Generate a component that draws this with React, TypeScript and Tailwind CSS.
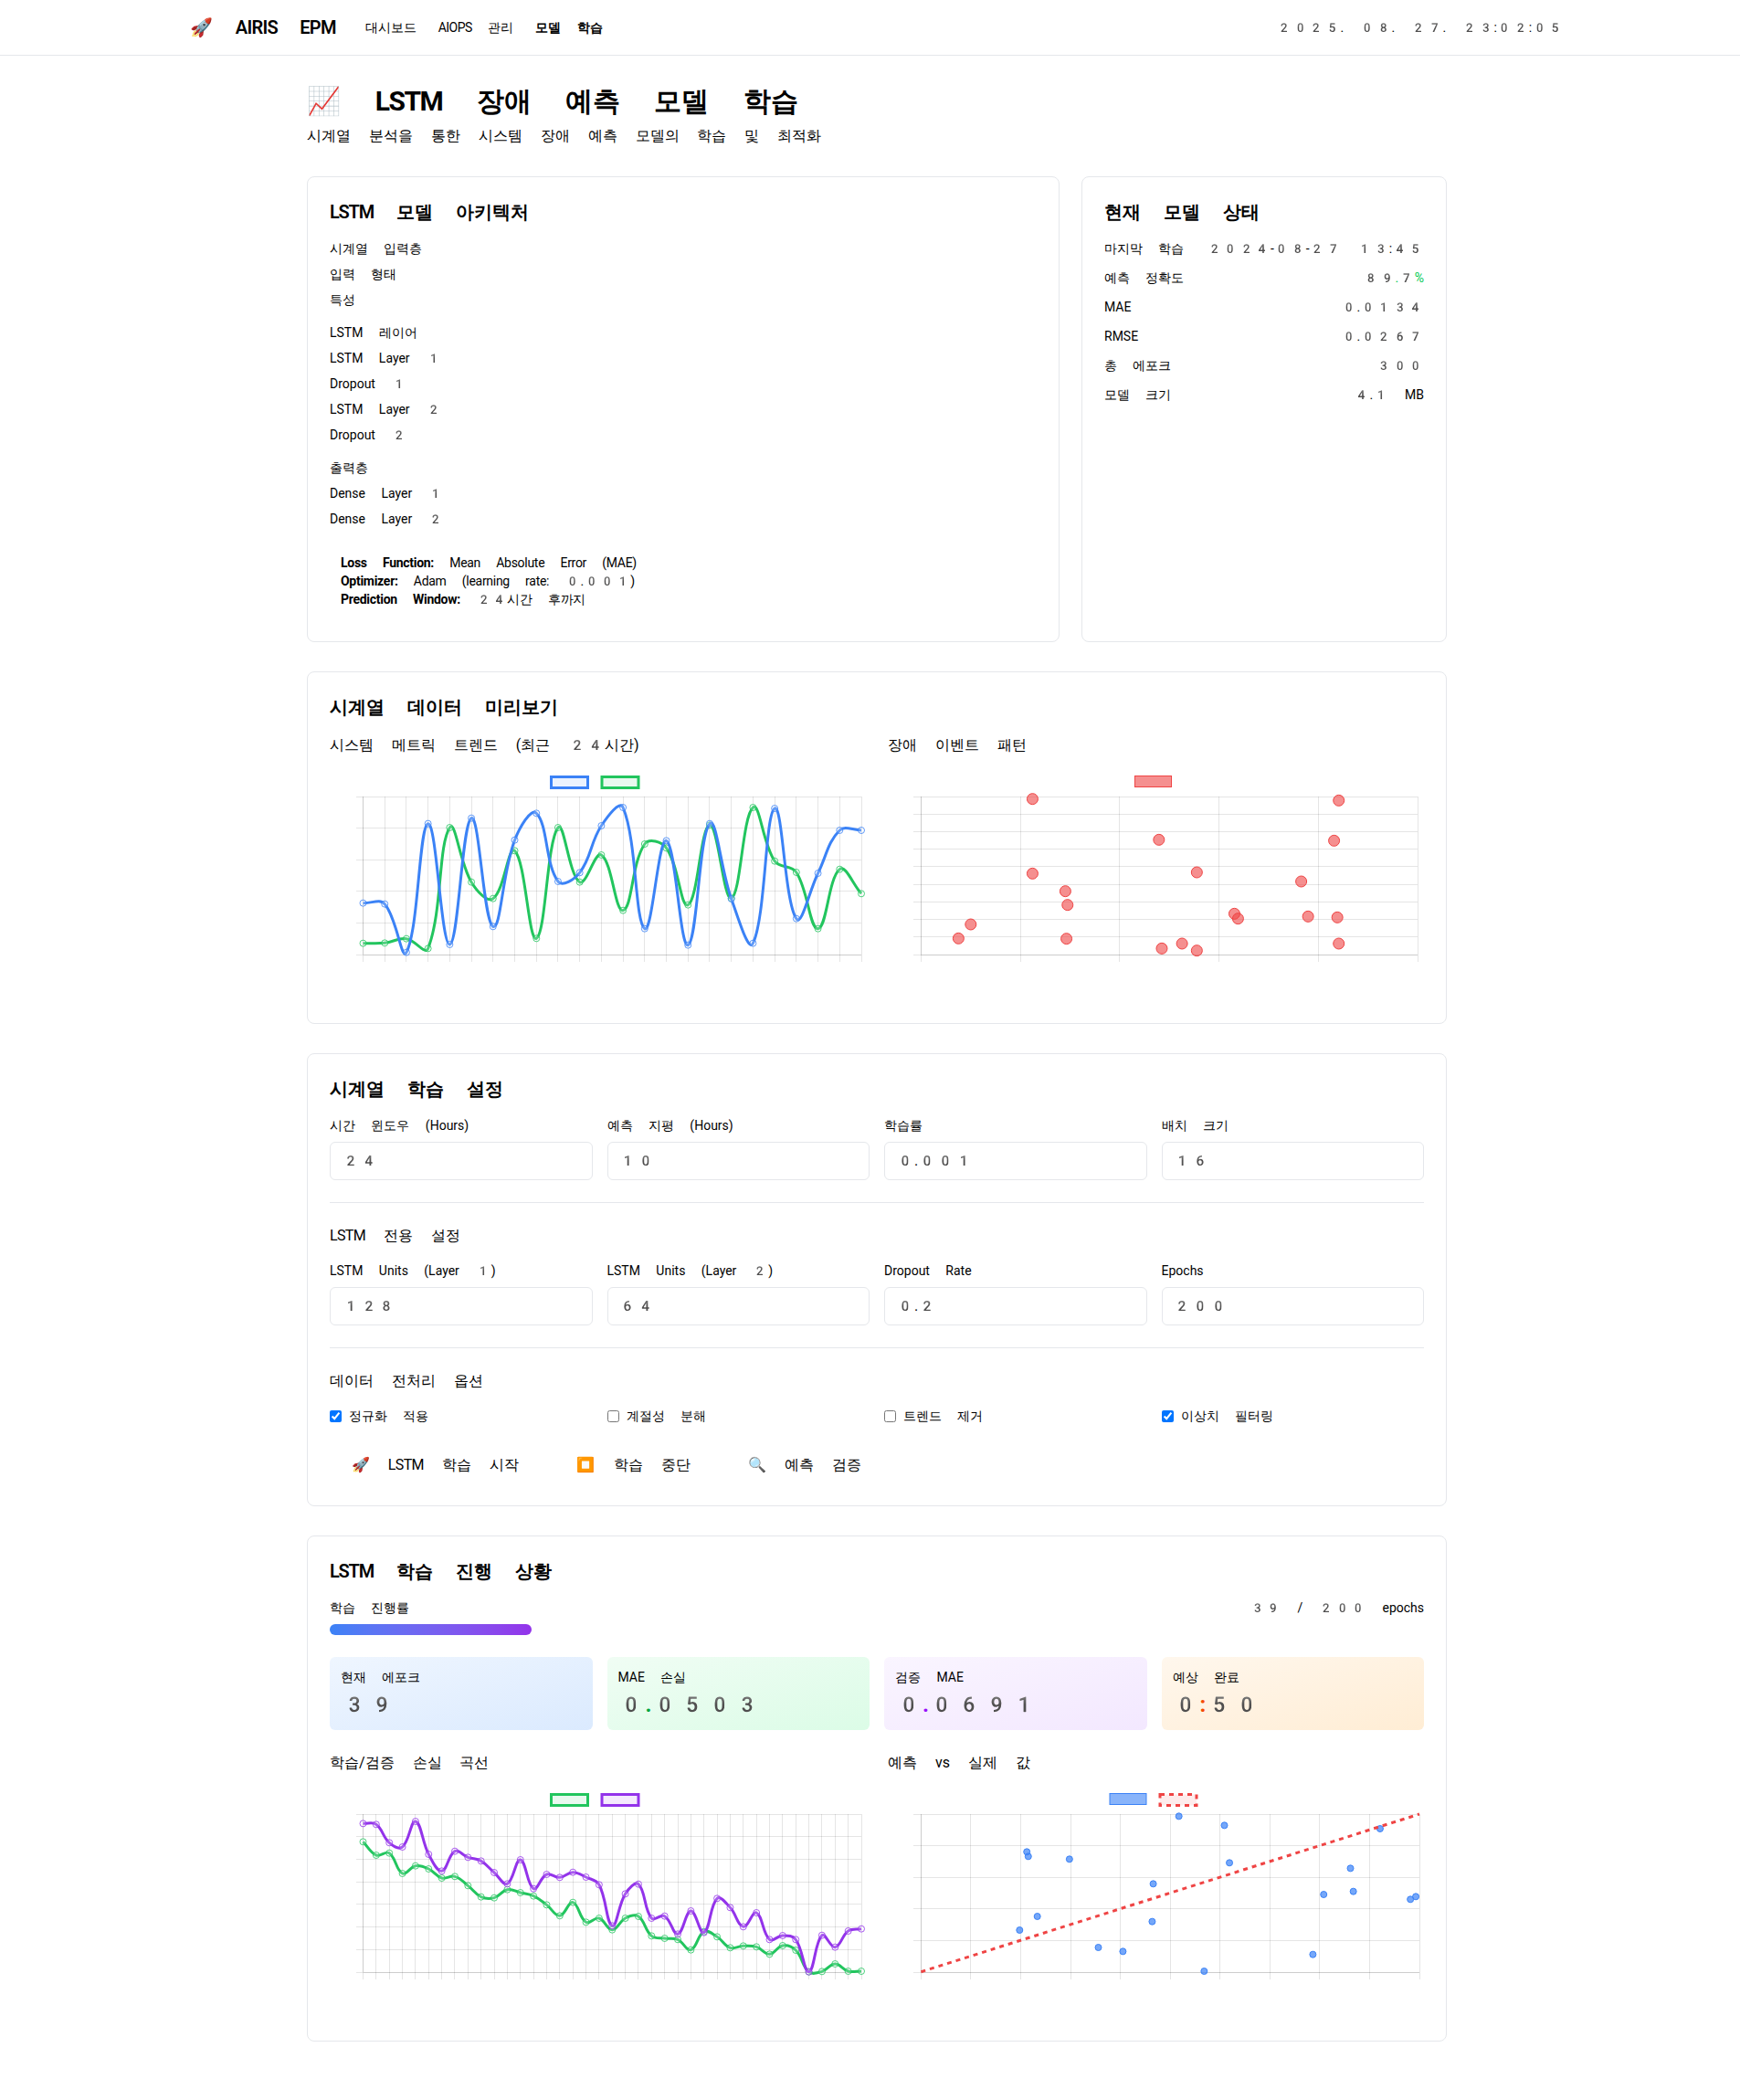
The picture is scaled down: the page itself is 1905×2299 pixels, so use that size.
import type { ReactNode } from "react"

// Chart.js style bezier through the points (tension 0.4)
function splinePath(points: number[][]) {
  const t = 0.4
  let d = `M${points[0][0]} ${points[0][1]}`
  const ctrl = points.map((p, i) => {
    const prev = points[i - 1] ?? p
    const next = points[i + 1] ?? p
    const d01 = Math.hypot(p[0] - prev[0], p[1] - prev[1])
    const d12 = Math.hypot(next[0] - p[0], next[1] - p[1])
    const sum = d01 + d12 || 1
    const fa = (t * d01) / sum
    const fb = (t * d12) / sum
    return {
      before: [p[0] - fa * (next[0] - prev[0]), p[1] - fa * (next[1] - prev[1])],
      after: [p[0] + fb * (next[0] - prev[0]), p[1] + fb * (next[1] - prev[1])],
    }
  })
  for (let i = 1; i < points.length; i++) {
    const a = ctrl[i - 1].after
    const b = ctrl[i].before
    d += ` C${a[0]} ${a[1]} ${b[0]} ${b[1]} ${points[i][0]} ${points[i][1]}`
  }
  return d
}

function Grid({ xs, ys }: { xs: number[]; ys: number[] }) {
  const left = xs[0]
  const right = xs[xs.length - 1]
  const top = ys[0]
  const bottom = ys[ys.length - 1]
  return (
    <g stroke="#000" strokeOpacity="0.1" strokeWidth="1" shapeRendering="crispEdges">
      {xs.map((x) => (
        <line key={x} x1={x} x2={x} y1={top} y2={bottom + 8} />
      ))}
      {ys.map((y) => (
        <line key={y} x1={left - 8} x2={right} y1={y} y2={y} />
      ))}
      <line x1={left} x2={left} y1={top} y2={bottom} />
      <line x1={left} x2={right} y1={bottom} y2={bottom} />
    </g>
  )
}

function Box({ x, color, fill, dashed }: { x: number; color: string; fill: string; dashed?: boolean }) {
  return (
    <rect x={x} y={10.5} width={40} height={12} fill={fill} stroke={color} strokeWidth="3" strokeDasharray={dashed ? "5 5" : undefined} />
  )
}

function Line({ data, color }: { data: number[][]; color: string }) {
  return (
    <g>
      <path d={splinePath(data)} fill="none" stroke={color} strokeWidth="3" />
      {data.map((p, i) => (
        <circle key={i} cx={p[0]} cy={p[1]} r="3.5" fill="rgba(255,255,255,0.2)" stroke={color} strokeOpacity="0.8" strokeWidth="1" />
      ))}
    </g>
  )
}

function Chart({ children }: { children: ReactNode }) {
  return (
    <svg width="587" height="256" viewBox="0 0 587 256" className="block">
      {children}
    </svg>
  )
}

const evenly = (a: number, b: number, n: number) => Array.from({ length: n }, (_, i) => a + ((b - a) * i) / (n - 1))

// values below are read off the reference
const trendYs = [32, 66, 101, 135, 170, 205]
const trendXs = evenly(36.5, 582, 24)
const blueRaw = [746, 749, 908, 485, 882, 467, 823, 539, 451, 675, 646, 492, 432, 830, 541, 884, 485, 732, 878, 435, 797, 648, 507, 507]
const greenRaw = [878, 877, 863, 895, 498, 677, 731, 574, 862, 498, 677, 588, 770, 552, 565, 752, 490, 730, 432, 608, 645, 830, 635, 715]
const blueLine = blueRaw.map((v, i) => [trendXs[i], v / 3 - 100])
const greenLine = greenRaw.map((v, i) => [trendXs[i], v / 3 - 100])

const eventXs = [122, 398, 672, 947, 1222, 1498].map((v) => v / 2.529 - 12)
const eventYs = [247, 304, 361, 418, 475, 535, 592, 649, 706, 766].map((v) => v / 3 - 50)
const eventPoints = [
  [431, 254], [1279, 259], [781, 388], [1266, 391], [431, 499], [886, 495], [1175, 525], [522, 557], [528, 602], [990, 631],
  [1000, 647], [1194, 640], [1275, 643], [260, 666], [226, 712], [525, 713], [1279, 729], [845, 729], [789, 745], [886, 752],
]

const lossYs = [198, 271, 346, 421, 493, 568, 643, 718].map((v) => v / 3 - 34)
const lossXs = evenly(36.5, 582, 39)
const purpleRaw = [229, 232, 292, 306, 222, 330, 385, 320, 340, 352, 390, 427, 348, 443, 396, 406, 389, 405, 430, 565, 460, 428, 540, 533, 592, 516, 587, 475, 505, 568, 522, 610, 597, 610, 716, 596, 635, 582, 575]
const lossRaw = [289, 333, 326, 393, 368, 378, 408, 403, 433, 470, 473, 446, 456, 467, 496, 532, 488, 553, 540, 578, 540, 534, 598, 606, 610, 644, 584, 601, 637, 631, 634, 658, 630, 645, 716, 715, 690, 714, 714]
const purpleLine = purpleRaw.map((v, i) => [lossXs[i], v / 3 - 34])
const lossLine = lossRaw.map((v, i) => [lossXs[i], v / 3 - 34])

const predXs = [97, 234, 373, 512, 648, 787, 925, 1063, 1201, 1338, 1477].map((v) => v / 2.529 - 2)
const predYs = [198, 301, 406, 508, 612, 718].map((v) => v / 3 - 34)
const predPoints = [
  [811, 205], [937, 235], [1368, 246], [390, 322], [394, 337], [508, 346], [951, 358], [1286, 376], [740, 427], [1294, 452],
  [1212, 462], [1467, 469], [1452, 478], [419, 534], [370, 579], [737, 551], [588, 636], [656, 649], [1182, 659], [881, 714],
]

function TrendChart() {
  return (
    <Chart>
      <Box x={242.5} color="#3b82f6" fill="rgba(59,130,246,0.1)" />
      <Box x={298} color="#22c55e" fill="rgba(34,197,94,0.1)" />
      <Grid xs={trendXs} ys={trendYs} />
      <Line data={greenLine} color="#22c55e" />
      <Line data={blueLine} color="#3b82f6" />
    </Chart>
  )
}

function EventChart() {
  return (
    <Chart>
      <rect x={270.5} y={9.5} width={40} height={12} fill="rgba(239,68,68,0.6)" stroke="#ef4444" strokeWidth="1" />
      <Grid xs={eventXs} ys={eventYs} />
      {eventPoints.map((p, i) => (
        <circle key={i} cx={p[0] / 2.529 - 12} cy={p[1] / 3 - 50} r="6" fill="rgba(239,68,68,0.6)" stroke="#ef4444" strokeWidth="1" />
      ))}
    </Chart>
  )
}

function LossChart() {
  return (
    <Chart>
      <Box x={242.5} color="#22c55e" fill="rgba(34,197,94,0.1)" />
      <Box x={298} color="#9333ea" fill="rgba(147,51,234,0.1)" />
      <Grid xs={lossXs} ys={lossYs} />
      <Line data={lossLine} color="#22c55e" />
      <Line data={purpleLine} color="#9333ea" />
    </Chart>
  )
}

function PredictionChart() {
  return (
    <Chart>
      <rect x={243} y={9.5} width={40} height={12} fill="rgba(59,130,246,0.6)" stroke="#3b82f6" strokeWidth="1" />
      <Box x={298} color="#ef4444" fill="rgba(239,68,68,0.1)" dashed />
      <Grid xs={predXs} ys={predYs} />
      {predPoints.map((p, i) => (
        <circle key={i} cx={p[0] / 2.529 - 2} cy={p[1] / 3 - 34} r="3.5" fill="rgba(59,130,246,0.7)" stroke="#3b82f6" strokeWidth="1" />
      ))}
      <line x1={36.4} y1={204.7} x2={582} y2={32} stroke="#ef4444" strokeWidth="3" strokeDasharray="5 5" />
    </Chart>
  )
}

function Card({ title, children }: { title: ReactNode; children: ReactNode }) {
  return (
    <section className="rounded-lg border border-gray-200 bg-white p-6">
      <h2 className="mb-4 text-xl leading-7 font-semibold">{title}</h2>
      {children}
    </section>
  )
}

function Field({ label, value }: { label: string; value: string }) {
  return (
    <div>
      <label className="mb-2 block text-sm">{label}</label>
      <input defaultValue={value} className="block h-[42px] w-full rounded-md border border-gray-200 px-3 pb-0.5 text-base outline-none" />
    </div>
  )
}

function Check({ label, checked }: { label: string; checked?: boolean }) {
  return (
    <label className="flex items-center text-sm">
      <input type="checkbox" defaultChecked={checked} className="mr-2" />
      {label}
    </label>
  )
}

function Metric({ label, bg, children }: { label: string; bg: string; children: ReactNode }) {
  return (
    <div className={`h-20 rounded-md bg-gradient-to-br p-3 ${bg}`}>
      <div className="text-sm">{label}</div>
      <div className="mt-1 text-2xl font-bold">{children}</div>
    </div>
  )
}

function StatusRow({ label, children }: { label: string; children: ReactNode }) {
  return (
    <div className="flex justify-between text-sm">
      <span>{label}</span>
      <span>{children}</span>
    </div>
  )
}

export default function App() {
  return (
    <div className="overflow-hidden bg-white">
      <div className="w-[1920px] font-['Noto_Color_Emoji',Roboto,sans-serif] text-black">
        <header className="h-[61px] border-b border-gray-200">
          <div className="mx-auto flex h-[60px] max-w-[1536px] items-center justify-between px-4">
            <div className="flex items-center gap-8">
              <div className="text-xl font-semibold">🚀 <span className="tracking-[-0.035em]">AIRIS EPM</span></div>
              <nav className="flex gap-6 text-sm">
                <a>대시보드</a>
                <a><span className="tracking-[-0.04em]">AIOPS</span> 관리</a>
                <a className="font-bold">모델 학습</a>
              </nav>
            </div>
            <div className="text-sm">2025. 08. 27. 23:02:05</div>
          </div>
        </header>

        <main className="mx-auto max-w-[1280px] px-4 pt-8 pb-16">
          <h1 className="text-3xl font-bold">📈 <span className="tracking-[-0.05em]">LSTM</span> 장애 예측 모델 학습</h1>
          <p className="mt-2 mb-8 text-base">시계열 분석을 통한 시스템 장애 예측 모델의 학습 및 최적화</p>

          <div className="mb-8 grid grid-cols-3 gap-6">
            <div className="col-span-2">
              <Card title={<><span className="tracking-[-0.06em]">LSTM</span> 모델 아키텍처</>}>
                <div className="space-y-4 text-sm">
                  <div className="space-y-2">
                    <div>시계열 입력층</div>
                    <div>입력 형태</div>
                    <div>특성</div>
                  </div>
                  <div className="space-y-2">
                    <div>LSTM 레이어</div>
                    <div>LSTM Layer 1</div>
                    <div>Dropout 1</div>
                    <div>LSTM Layer 2</div>
                    <div>Dropout 2</div>
                  </div>
                  <div className="space-y-2">
                    <div>출력층</div>
                    <div>Dense Layer 1</div>
                    <div>Dense Layer 2</div>
                  </div>
                  <div className="p-3 tracking-[-0.02em]">
                    <div><b>Loss Function:</b> Mean Absolute Error (MAE)</div>
                    <div><b>Optimizer:</b> Adam (learning rate: 0.001)</div>
                    <div><b>Prediction Window:</b> 24시간 후까지</div>
                  </div>
                </div>
              </Card>
            </div>
            <Card title="현재 모델 상태">
              <div className="space-y-3">
                <StatusRow label="마지막 학습">2024-08-27 13:45</StatusRow>
                <StatusRow label="예측 정확도"><span className="text-green-500">89.7%</span></StatusRow>
                <StatusRow label="MAE">0.0134</StatusRow>
                <StatusRow label="RMSE">0.0267</StatusRow>
                <StatusRow label="총 에포크">300</StatusRow>
                <StatusRow label="모델 크기">4.1 MB</StatusRow>
              </div>
            </Card>
          </div>

          <div className="mb-8">
            <Card title="시계열 데이터 미리보기">
              <div className="grid grid-cols-2 gap-6">
                <div>
                  <h3 className="mb-3 text-base">시스템 메트릭 트렌드 (최근 24시간)</h3>
                  <TrendChart />
                </div>
                <div>
                  <h3 className="mb-3 text-base">장애 이벤트 패턴</h3>
                  <EventChart />
                </div>
              </div>
            </Card>
          </div>

          <div className="mb-8">
            <Card title="시계열 학습 설정">
              <div className="grid grid-cols-4 gap-4">
                <Field label="시간 윈도우 (Hours)" value="24" />
                <Field label="예측 지평 (Hours)" value="10" />
                <Field label="학습률" value="0.001" />
                <Field label="배치 크기" value="16" />
              </div>
              <div className="mt-6 border-t border-gray-200 pt-6">
                <h3 className="mb-4 text-base"><span className="tracking-[-0.04em]">LSTM</span> 전용 설정</h3>
                <div className="grid grid-cols-4 gap-4">
                  <Field label="LSTM Units (Layer 1)" value="128" />
                  <Field label="LSTM Units (Layer 2)" value="64" />
                  <Field label="Dropout Rate" value="0.2" />
                  <Field label="Epochs" value="200" />
                </div>
              </div>
              <div className="mt-6 border-t border-gray-200 pt-6">
                <h3 className="mb-4 text-base">데이터 전처리 옵션</h3>
                <div className="grid grid-cols-4 gap-4">
                  <Check label="정규화 적용" checked />
                  <Check label="계절성 분해" />
                  <Check label="트렌드 제거" />
                  <Check label="이상치 필터링" checked />
                </div>
              </div>
              <div className="mt-6 flex gap-4 text-base">
                <button className="h-10 px-6">🚀 <span className="tracking-[-0.04em]">LSTM</span> 학습 시작</button>
                <button className="h-10 px-6">⏹️ 학습 중단</button>
                <button className="h-10 px-6">🔍 예측 검증</button>
              </div>
            </Card>
          </div>

          <Card title={<><span className="tracking-[-0.06em]">LSTM</span> 학습 진행 상황</>}>
            <div className="mb-2 flex justify-between text-sm">
              <span>학습 진행률</span>
              <span>39 / 200 epochs</span>
            </div>
            <div className="mb-6 h-3 w-[221px] rounded-full bg-gradient-to-r from-[#3b82f6] to-[#9333ea]" />
            <div className="mb-6 grid grid-cols-4 gap-4">
              <Metric label="현재 에포크" bg="from-blue-50 to-blue-100"><span className="text-blue-600">39</span></Metric>
              <Metric label="MAE 손실" bg="from-green-50 to-green-100"><span className="text-green-600">0.0503</span></Metric>
              <Metric label="검증 MAE" bg="from-purple-50 to-purple-100"><span className="text-purple-600">0.0691</span></Metric>
              <Metric label="예상 완료" bg="from-orange-50 to-orange-100"><span className="text-orange-600">0:50</span></Metric>
            </div>
            <div className="grid grid-cols-2 gap-6">
              <div>
                <h3 className="mb-3 text-base">학습/검증 손실 곡선</h3>
                <LossChart />
              </div>
              <div>
                <h3 className="mb-3 text-base">예측 vs 실제 값</h3>
                <PredictionChart />
              </div>
            </div>
          </Card>
        </main>
      </div>
    </div>
  )
}
